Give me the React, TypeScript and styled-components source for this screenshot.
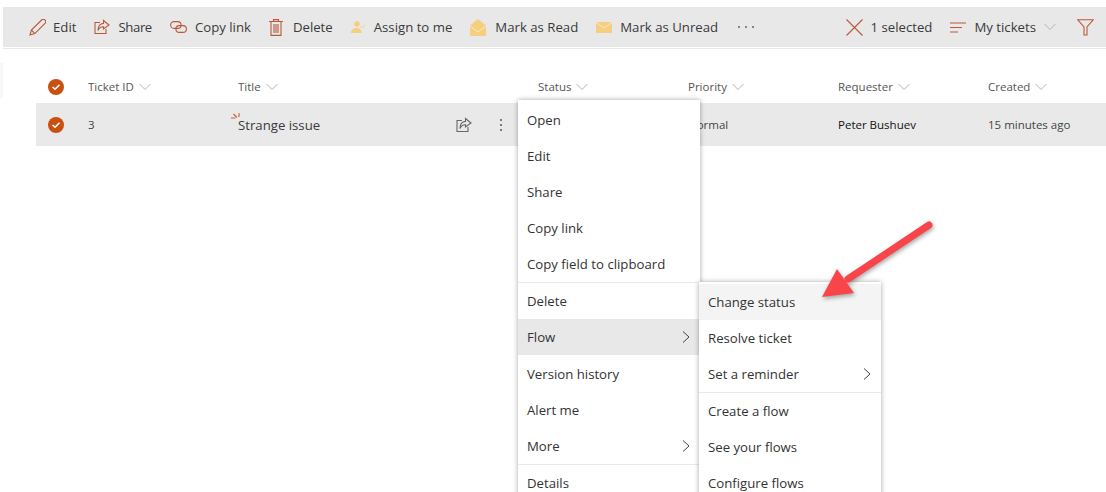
import React from 'react';
import styled, { createGlobalStyle } from 'styled-components';

const ORANGE = '#b9593a';
const PALE = '#f3cf7f';

const GlobalStyle = createGlobalStyle`
  html, body {
    margin: 0;
    padding: 0;
    background: #fff;
    overflow: hidden;
  }
  body {
    font-family: "Open Sans", "Noto Sans", "Liberation Sans", sans-serif;
    color: #333;
  }
`;

const Chevron = () => (
  <svg width="12" height="8" viewBox="0 0 12 8" fill="none" stroke="#b4b4b4" strokeWidth="1">
    <path d="M.5 1 6 6.5 11.5 1" />
  </svg>
);

const ChevronRight = () => (
  <svg width="8" height="12" viewBox="0 0 8 12" fill="none" stroke="#444" strokeWidth="1">
    <path d="M1 .5 7 6 1 11.5" />
  </svg>
);

const Check = () => (
  <CheckCircle>
    <svg width="10" height="8" viewBox="0 0 10 8" fill="none" stroke="#fff" strokeWidth="1.6">
      <path d="M1.5 4 4 6.2 8.5 1.8" />
    </svg>
  </CheckCircle>
);

const ShareIcon = ({ color = ORANGE }: { color?: string }) => (
  <svg width="16" height="16" viewBox="0 0 16 16" fill="none" stroke={color} strokeWidth="1.1">
    <path d="M6 3.5H1v11h11V10" />
    <path d="M9.5 1.5 15 6l-5.5 4V7.7C7 7.7 5 9 4 11.500 4 7.500 6.300 4.700 9.500 4.400z" />
  </svg>
);

const toolbarIcons = {
  edit: (
    <svg width="17" height="17" viewBox="0 0 17 17" fill="none" stroke={ORANGE} strokeWidth="1.1">
      <path d="M1 16 2.400 11 12.600 1a1.800 1.800 0 0 1 3.400 3.300L5.800 14.600z" />
      <path d="M2.400 11 5.800 14.600" />
    </svg>
  ),
  link: (
    <svg width="17" height="12" viewBox="0 0 17 12" fill="none" stroke={ORANGE} strokeWidth="1.1">
      <rect x=".6" y=".6" width="10.500" height="6.800" rx="3.400" />
      <rect x="5.900" y="4.600" width="10.500" height="6.800" rx="3.400" />
    </svg>
  ),
  trash: (
    <svg width="14" height="17" viewBox="0 0 14 17" fill="none" stroke={ORANGE} strokeWidth="1.1">
      <path d="M0 2.500h14M4.500 2.500V.6h5v1.900M2 2.500v13.900h10V2.500M5 5v9M7 5v9M9 5v9" />
    </svg>
  ),
  assign: (
    <svg width="15" height="12" viewBox="0 0 15 12" fill={PALE}>
      <circle cx="6" cy="3" r="2.800" />
      <path d="M0 12c0-3.500 2.500-5 5.500-5s5 1.500 5 5z" />
      <path d="m9.500 5.500 1.700 1.700 3-3.400" fill="none" stroke={PALE} strokeWidth="1" />
    </svg>
  ),
  read: (
    <svg width="16" height="17" viewBox="0 0 16 17">
      <path d="M0 6.500 8 0l8 6.500V17H0z" fill={PALE} />
      <path d="m0 7 8 6 8-6" fill="none" stroke="#fbeac4" strokeWidth="1" />
    </svg>
  ),
  unread: (
    <svg width="16" height="11" viewBox="0 0 16 11">
      <path d="M0 0h16v11H0z" fill={PALE} />
      <path d="m0 .5 8 5.500 8-5.500" fill="none" stroke="#fbeac4" strokeWidth="1" />
    </svg>
  ),
  close: (
    <svg width="17" height="17" viewBox="0 0 17 17" fill="none" stroke={ORANGE} strokeWidth="1.1">
      <path d="M.5.5l16 16M16.500.5l-16 16" />
    </svg>
  ),
  lines: (
    <svg width="16" height="11" viewBox="0 0 16 11" fill="none" stroke={ORANGE} strokeWidth="1.1">
      <path d="M0 1h16M0 5.500h12M0 10h8" />
    </svg>
  ),
  filter: (
    <svg width="17" height="17" viewBox="0 0 17 17" fill="none" stroke={ORANGE} strokeWidth="1.1">
      <path d="M.8.800h15.400L10 8v8H7V8z" />
    </svg>
  ),
};

export default function App() {
  return (
    <Page>
      <GlobalStyle />
      <Toolbar>
        <ToolGroup>
          <ToolItem $gap={7}>{toolbarIcons.edit}Edit</ToolItem>
          <ToolItem $tight><ShareIcon />Share</ToolItem>
          <ToolItem>{toolbarIcons.link}Copy link</ToolItem>
          <ToolItem $gap={10}>{toolbarIcons.trash}Delete</ToolItem>
          <ToolItem>{toolbarIcons.assign}Assign to me</ToolItem>
          <ToolItem $gap={9}>{toolbarIcons.read}Mark as Read</ToolItem>
          <ToolItem>{toolbarIcons.unread}Mark as Unread</ToolItem>
          <MoreDots><i /><i /><i /></MoreDots>
        </ToolGroup>
        <ToolGroup>
          <ToolItem>{toolbarIcons.close}1 selected</ToolItem>
          <ToolItem>{toolbarIcons.lines}My tickets<Chevron /></ToolItem>
          <FilterButton>{toolbarIcons.filter}</FilterButton>
        </ToolGroup>
      </Toolbar>
      <ToolbarRule />

      <Table>
        <HeaderRow>
          <CheckCell><Check /></CheckCell>
          {['Ticket ID', 'Title', 'Status', 'Priority', 'Requester', 'Created'].map((h) => (
            <HeaderCell key={h}>{h}<Chevron /></HeaderCell>
          ))}
        </HeaderRow>
        <DataRow>
          <CheckCell><Check /></CheckCell>
          <Cell>3</Cell>
          <TitleCell>
            <TitleText>
              <Sparkle width="10" height="10" viewBox="0 0 10 10" fill="none" stroke="#c8602f" strokeWidth="1.100">
                <path d="M0 5h4.500M2.500 1 6 4.500M8 0v4" />
              </Sparkle>
              Strange issue
            </TitleText>
            <RowActions>
              <ShareIcon color="#666" />
              <VerticalDots><i /><i /><i /></VerticalDots>
            </RowActions>
          </TitleCell>
          <Cell />
          <Cell>Normal</Cell>
          <Cell $strong>Peter Bushuev</Cell>
          <Cell>15 minutes ago</Cell>
        </DataRow>
      </Table>

      <MainMenu>
        <MenuItem>Open</MenuItem>
        <MenuItem>Edit</MenuItem>
        <MenuItem>Share</MenuItem>
        <MenuItem>Copy link</MenuItem>
        <MenuItem>Copy field to clipboard</MenuItem>
        <MenuDivider />
        <MenuItem>Delete</MenuItem>
        <MenuItem $active>Flow<ChevronRight /></MenuItem>
        <MenuDivider $blank />
        <MenuItem>Version history</MenuItem>
        <MenuItem>Alert me</MenuItem>
        <MenuItem>More<ChevronRight /></MenuItem>
        <MenuDivider />
        <MenuItem>Details</MenuItem>
      </MainMenu>

      <SubMenu>
        <MenuItem $hover>Change status</MenuItem>
        <MenuItem>Resolve ticket</MenuItem>
        <MenuItem>Set a reminder<ChevronRight /></MenuItem>
        <MenuDivider />
        <MenuItem>Create a flow</MenuItem>
        <MenuItem>See your flows</MenuItem>
        <MenuItem>Configure flows</MenuItem>
      </SubMenu>

      <Arrow width="140" height="100" viewBox="0 0 140 100">
        <path d="M109 5 28 59" fill="none" stroke="#f9444a" strokeWidth="7" strokeLinecap="round" />
        <path d="M2 77 17 49 34 73z" fill="#f9444a" />
      </Arrow>
    </Page>
  );
}

const Page = styled.div`
  position: relative;
  width: 1106px;
  height: 492px;
  padding-top: 7px;
  box-sizing: border-box;
  overflow: hidden;

  &::before {
    content: '';
    position: absolute;
    left: 0;
    top: 63px;
    width: 3px;
    height: 35px;
    background: #f8f8f8;
  }
`;

const Toolbar = styled.div`
  height: 40px;
  margin-left: 3px;
  padding: 0 12px 0 26px;
  background: #e8e8e8;
  display: flex;
  align-items: center;
  justify-content: space-between;
`;

const ToolbarRule = styled.div`
  height: 1px;
  margin: 1px 0 0 3px;
  background: #e9e9e9;
`;

const ToolGroup = styled.div`
  display: flex;
  align-items: center;
  gap: 18px;
`;

const ToolItem = styled.div<{ $gap?: number; $tight?: boolean }>`
  display: flex;
  align-items: center;
  gap: ${({ $gap }) => $gap ?? 8}px;
  font-size: 13.2px;
  letter-spacing: ${({ $tight }) => ($tight ? '-0.4px' : 'normal')};
  color: #3a3a3a;
  white-space: nowrap;
`;

const MoreDots = styled.span`
  display: flex;
  gap: 5px;
  margin-left: 2px;

  i {
    width: 2px;
    height: 2px;
    border-radius: 50%;
    background: #666;
  }
`;

const FilterButton = styled.div`
  display: flex;
  margin-left: 3px;
`;

const Table = styled.div`
  margin: 14px 0 0 36px;
`;

const rowGrid = `
  display: grid;
  grid-template-columns: 52px 150px 300px repeat(3, 150px) 1fr;
  align-items: center;
`;

const HeaderRow = styled.div`
  ${rowGrid}
  height: 40px;
  padding-top: 7px;
  box-sizing: border-box;
`;

const DataRow = styled.div`
  ${rowGrid}
  grid-template-columns: 52px 150px 300px 150px 150px 150px 1fr;
  height: 43px;
  background: #e9e9e9;
`;

const CheckCell = styled.div`
  display: flex;
  padding-left: 12px;
`;

const CheckCircle = styled.span`
  width: 16px;
  height: 16px;
  border-radius: 50%;
  background: #ca5010;
  display: flex;
  align-items: center;
  justify-content: center;
`;

const HeaderCell = styled.div`
  display: flex;
  align-items: center;
  gap: 5px;
  font-size: 11.5px;
  color: #555;
`;

const Cell = styled.div<{ $strong?: boolean }>`
  font-size: 11.5px;
  color: ${({ $strong }) => ($strong ? '#111' : '#444')};
  font-weight: ${({ $strong }) => ($strong ? 500 : 400)};
`;

const TitleCell = styled.div`
  display: flex;
  align-items: center;
  justify-content: space-between;
  padding-right: 36px;
`;

const TitleText = styled.span`
  position: relative;
  font-size: 13.2px;
  margin-top: 1px;
  color: #3a3a3a;
  white-space: nowrap;
`;

const Sparkle = styled.svg`
  position: absolute;
  left: -7px;
  top: -3px;
`;

const RowActions = styled.div`
  display: flex;
  align-items: center;
  gap: 28px;
`;

const VerticalDots = styled.span`
  display: flex;
  flex-direction: column;
  gap: 3px;

  i {
    width: 2px;
    height: 2px;
    background: #555;
    border-radius: 50%;
  }
`;

const menuBase = `
  position: absolute;
  width: 182px;
  background: #fff;
  box-shadow: 0 0 5px rgba(0, 0, 0, 0.35);
  box-sizing: border-box;
`;

const MainMenu = styled.div`
  ${menuBase}
  left: 518px;
  top: 100px;
  padding-top: 2px;
`;

const SubMenu = styled.div`
  ${menuBase}
  left: 699px;
  top: 282px;
  padding-top: 2px;
`;

const MenuItem = styled.div<{ $active?: boolean; $hover?: boolean }>`
  height: 36px;
  padding: 0 10px 0 9px;
  display: flex;
  align-items: center;
  justify-content: space-between;
  font-size: 13.2px;
  color: #333;
  background: ${({ $active, $hover }) => ($active ? '#e8e8e8' : $hover ? '#f4f4f4' : 'transparent')};
`;

const MenuDivider = styled.div<{ $blank?: boolean }>`
  height: 1px;
  background: ${({ $blank }) => ($blank ? 'transparent' : '#eaeaea')};
`;

const Arrow = styled.svg`
  position: absolute;
  left: 820px;
  top: 220px;
  filter: drop-shadow(1px 2px 2px rgba(0, 0, 0, 0.35));
`;
